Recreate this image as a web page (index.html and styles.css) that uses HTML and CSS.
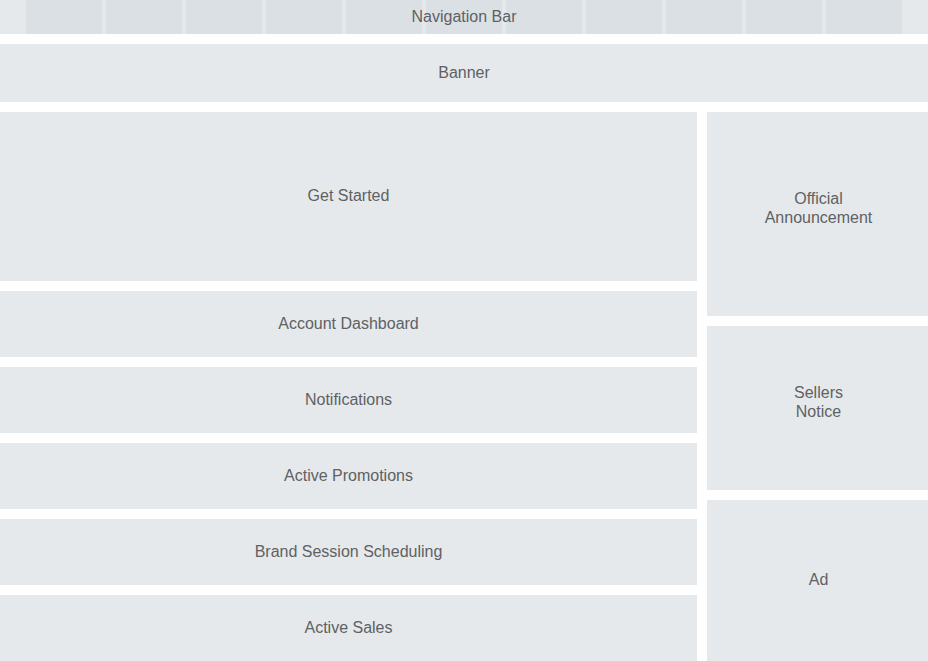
FILE: index.html
```html
<!DOCTYPE html>
<html>
<head>
<meta charset="utf-8">
<link rel="stylesheet" href="styles.css">
</head>
<body>
<div class="page">
  <nav class="nav">
    <div class="nav-items">
      <span class="nav-item"></span><span class="nav-item"></span><span class="nav-item"></span><span class="nav-item"></span><span class="nav-item"></span><span class="nav-item"></span><span class="nav-item"></span><span class="nav-item"></span><span class="nav-item"></span><span class="nav-item"></span><span class="nav-item"></span>
    </div>
    <span class="nav-label">Navigation Bar</span>
  </nav>
  <div class="block banner">Banner</div>
  <div class="main">
    <div class="col-left">
      <div class="block get-started">Get Started</div>
      <div class="block row">Account Dashboard</div>
      <div class="block row">Notifications</div>
      <div class="block row">Active Promotions</div>
      <div class="block row">Brand Session Scheduling</div>
      <div class="block row">Active Sales</div>
    </div>
    <div class="col-right">
      <div class="block announce two-line">Official<br>Announcement</div>
      <div class="block sellers two-line">Sellers<br>Notice</div>
      <div class="block ad">Ad</div>
    </div>
  </div>
</div>
</body>
</html>
```
FILE: styles.css
```css
html, body {
  margin: 0;
  padding: 0;
  background: #ffffff;
}
body {
  font-family: "Liberation Sans", Arial, sans-serif;
  font-size: 16px;
  color: #5f6163;
}
.page {
  display: flex;
  flex-direction: column;
  gap: 10px;
  width: 928px;
}
.nav {
  position: relative;
  height: 34px;
  background: #e6e9ec;
}
.nav-items {
  display: flex;
  gap: 4px;
  padding-left: 26px;
  height: 34px;
}
.nav-item {
  width: 76px;
  height: 34px;
  background: #dbe0e5;
}
.nav-label {
  position: absolute;
  left: 0;
  right: 0;
  top: 0;
  height: 34px;
  line-height: 34px;
  text-align: center;
}
.block {
  background: #e5e9ec;
  display: flex;
  align-items: center;
  justify-content: center;
  text-align: center;
  line-height: 19px;
  box-sizing: border-box;
  padding-bottom: 2px;
}
.banner {
  height: 58px;
}
.main {
  display: flex;
  gap: 10px;
}
.col-left {
  width: 697px;
  display: flex;
  flex-direction: column;
  gap: 10px;
}
.col-right {
  width: 221px;
  display: flex;
  flex-direction: column;
  gap: 10px;
}
.get-started {
  height: 169px;
  padding-bottom: 2px;
}
.row {
  height: 66px;
}
.announce {
  height: 204px;
}
.sellers {
  height: 164px;
}
.two-line {
  padding-bottom: 12px;
  padding-left: 2px;
}
.ad {
  height: 161px;
  padding-left: 2px;
}
```
